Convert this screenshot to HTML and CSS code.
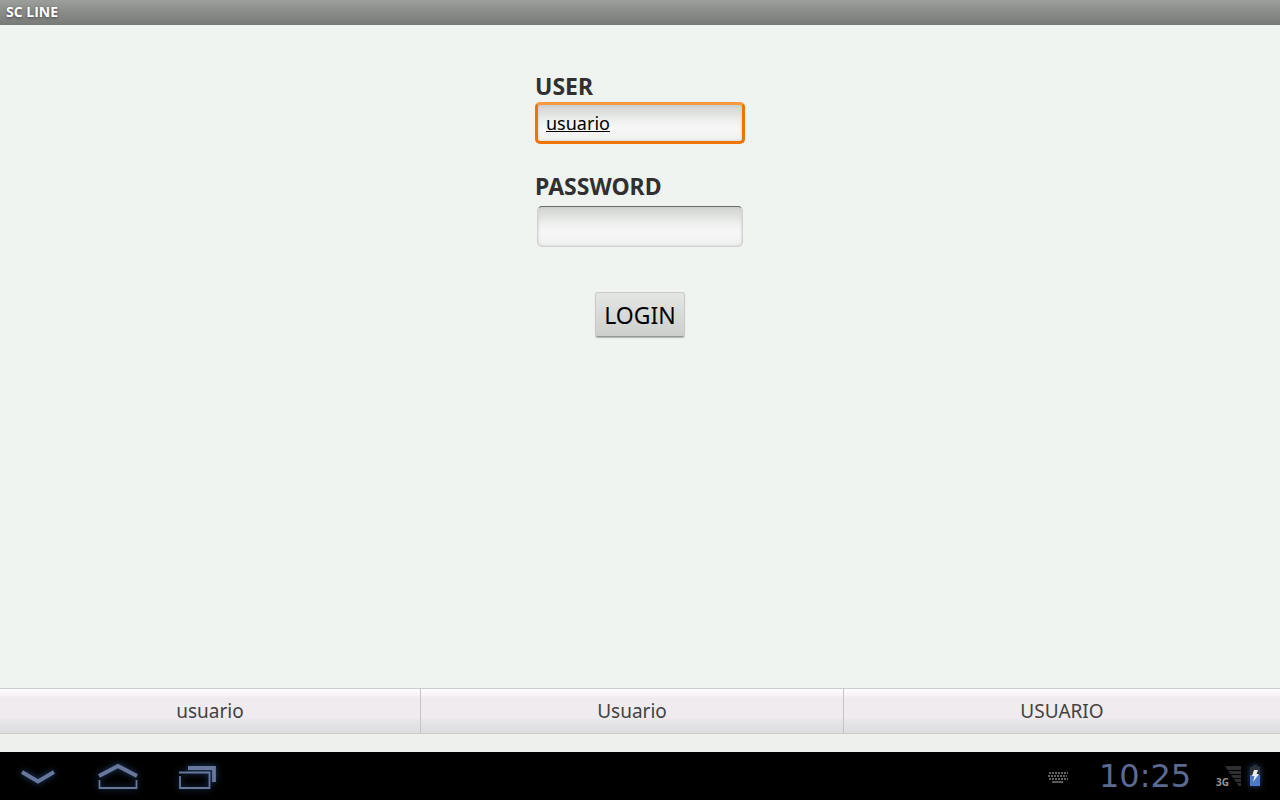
FILE: index.html
```html
<!DOCTYPE html>
<html lang="es">
<head>
<meta charset="utf-8">
<meta name="viewport" content="width=device-width, initial-scale=1">
<title>SC LINE</title>
<link rel="stylesheet" href="styles.css">
</head>
<body>
<header class="title-bar"><h1 class="title">SC LINE</h1></header>
<main class="content">
  <form class="login">
    <label class="label" for="user">USER</label>
    <input class="field field-focused" id="user" type="text" value="usuario">
    <label class="label label-password" for="password">PASSWORD</label>
    <input class="field" id="password" type="password">
    <button class="submit" type="button">LOGIN</button>
  </form>
</main>
<div class="suggestions">
  <button class="suggestion" type="button">usuario</button>
  <button class="suggestion" type="button">Usuario</button>
  <button class="suggestion" type="button">USUARIO</button>
</div>
<footer class="system-bar">
  <nav class="nav">
    <button class="nav-button" type="button" aria-label="Back">
      <svg class="glow" width="44" height="32" viewBox="0 0 44 32"><path d="M6 12 22 21.500 38 12" fill="none" stroke="#68779b" stroke-width="3.800"/></svg>
    </button>
    <button class="nav-button" type="button" aria-label="Home">
      <svg class="glow" width="44" height="32" viewBox="0 0 44 32"><path d="M3 16 22 6 41 16" fill="none" stroke="#68779b" stroke-width="4"/><path d="M3.500 20V28H40.500V20" fill="none" stroke="#68779b" stroke-width="1.800"/></svg>
    </button>
    <button class="nav-button" type="button" aria-label="Recent apps">
      <svg class="glow" width="44" height="32" viewBox="0 0 44 32"><path d="M12 8H38V22" fill="none" stroke="#68779b" stroke-width="3.800"/><path d="M3 12.500H33.500V28H4V16" fill="none" stroke="#68779b" stroke-width="1.800"/></svg>
    </button>
  </nav>
  <div class="status">
    <svg class="keyboard" width="20" height="12" viewBox="0 0 20 12"><path d="M1 2H20M0 5H19M1 8H20" stroke="#626262" stroke-width="2" stroke-dasharray="2 1"/><path d="M4 11H15" stroke="#777" stroke-width="1.500"/></svg>
    <time class="clock">10:25</time>
    <span class="network">3G</span>
    <svg class="signal" width="16" height="20" viewBox="0 0 16 20"><path d="M0 0H16V4H2.500ZM3 5H16V8H5.500ZM6 9H16V12H8ZM8.500 13H16V16H11ZM11.500 17H16V20H14Z" fill="#2d2f33"/></svg>
    <svg class="glow" width="12" height="22" viewBox="0 0 12 22"><path d="M4 0H8V2H11V10H1V2H4Z" fill="#303239"/><path d="M1 10H11V21H1Z" fill="#4e78c8"/><path d="M5 5H9L7.500 9H10L4 17 5.500 11H3Z" fill="#e9edf5"/></svg>
  </div>
</footer>
</body>
</html>
```
FILE: styles.css
```css
* { box-sizing: border-box; }
body {
  margin: 0;
  min-height: 100vh;
  display: flex;
  flex-direction: column;
  background: #f0f4f0;
  color: #303030;
  font-family: "Noto Sans", "Open Sans", sans-serif;
}
button, input { font-family: inherit; }
.title-bar {
  padding: 2px 6px 3px;
  background: linear-gradient(#9c9e9b, #787a77);
}
.title {
  margin: 0;
  font-family: "Open Sans", "Noto Sans", sans-serif;
  font-size: 14px;
  line-height: 20px;
  color: #fff;
  text-shadow: 0 1px 3px #444;
}
.content {
  flex: 1;
  display: flex;
  justify-content: center;
  align-items: flex-start;
  padding: 46px 16px;
}
.login {
  display: flex;
  flex-direction: column;
  width: 210px;
}
.label {
  font-size: 23px;
  line-height: 31px;
  font-weight: bold;
}
.label-password { margin-top: 27px; }
.field {
  height: 41px;
  margin: 4px 2px 0;
  padding: 0 8px;
  border: 1px solid #cfd1cf;
  border-top-color: #696b69;
  border-radius: 5px;
  background: linear-gradient(#d0d2d0, #eceeec 40%, #f7f7f7 65%, #eff1ef);
  box-shadow: inset 0 0 3px #c8cac8;
  font-size: 18px;
  color: #000;
  outline: none;
}
.field-focused {
  height: 42px;
  margin: 0;
  border: 3px solid #ee7600;
  border-top-color: #f99a40;
  text-decoration: underline;
}
.submit {
  align-self: center;
  margin-top: 45px;
  padding: 6px 8px 5px;
  border: 1px solid #c9cbc9;
  border-bottom-color: #969896;
  border-radius: 3px;
  background: linear-gradient(#e4e6e4, #cdcfcd);
  box-shadow: 0 1px 1px #b4b6b4;
  font-size: 23px;
  line-height: 32px;
  color: #000;
}
.suggestions {
  display: grid;
  grid-template-columns: 421fr 423fr 436fr;
  border-top: 1px solid #cccecd;
  background: #eef0ee;
  padding-bottom: 18px;
}
.suggestion {
  height: 45px;
  padding: 0 0 1px;
  border: 0;
  border-right: 1px solid #c5c3c6;
  border-bottom: 1px solid #cacaca;
  background: linear-gradient(#fefcfe, #f8f2f8 14%, #efebef 20%, #efebef 65%, #e5e4e6 75%, #dedcdf);
  font-size: 19px;
  color: #424242;
}
.suggestion:last-child { border-right: 0; }
.system-bar {
  display: flex;
  justify-content: space-between;
  align-items: center;
  height: 48px;
  padding: 0 19px 0 16px;
  background: #000;
}
.nav { display: flex; gap: 36px; }
.nav-button {
  display: flex;
  padding: 0;
  border: 0;
  background: none;
}
.glow { filter: drop-shadow(0 0 3px #244777); }
.status { display: flex; align-items: center; }
.keyboard { margin-top: 2px; }
.clock {
  width: 122px;
  margin: 0 10px 0 16px;
  font-family: "DejaVu Sans", sans-serif;
  font-size: 32px;
  line-height: 40px;
  text-align: center;
  color: #5a6a91;
}
.network {
  padding-top: 12px;
  font-family: "Open Sans", "Noto Sans", sans-serif;
  font-size: 10px;
  line-height: 16px;
  font-weight: bold;
  color: #969696;
}
.signal { margin: 0 8px 0 -4px; }
```
